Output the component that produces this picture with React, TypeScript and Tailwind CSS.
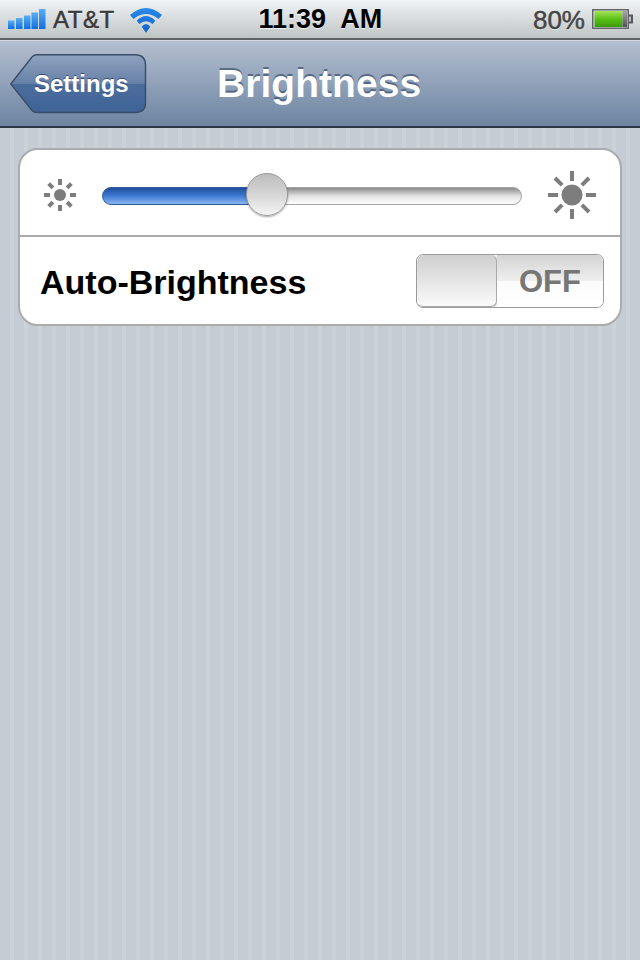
const SunIcon = ({ size, core, rayW, inner, outer }: { size: number; core: number; rayW: number; inner: number; outer: number }) => {
  const c = size / 2;
  const angles = [0, 45, 90, 135, 180, 225, 270, 315];
  return (
    <svg width={size} height={size} viewBox={`0 0 ${size} ${size}`} className="shrink-0">
      <circle cx={c} cy={c} r={core} fill="#7d7d7d" />
      {angles.map((a) => (
        <line
          key={a}
          x1={c}
          y1={c - inner}
          x2={c}
          y2={c - outer}
          stroke="#7d7d7d"
          strokeWidth={rayW}
          transform={`rotate(${a} ${c} ${c})`}
        />
      ))}
    </svg>
  );
};

const SignalBars = () => {
  const bars = [
    { x: 0, y: 11.5, h: 8.5 },
    { x: 8, y: 9, h: 11 },
    { x: 16, y: 6.5, h: 13.5 },
    { x: 23.5, y: 3.5, h: 16.5 },
    { x: 31, y: 0, h: 20 },
  ];
  return (
    <svg width="38" height="20" viewBox="0 0 38 20">
      <defs>
        <linearGradient id="sig" x1="0" y1="0" x2="0" y2="1">
          <stop offset="0" stopColor="#5aaef0" />
          <stop offset="1" stopColor="#0f6fe0" />
        </linearGradient>
      </defs>
      {bars.map((b) => (
        <rect key={b.x} x={b.x} y={b.y} width="6.5" height={b.h} fill="url(#sig)" />
      ))}
    </svg>
  );
};

const WifiIcon = () => (
  <svg width="32" height="25" viewBox="0 0 32 25">
    <defs>
      <linearGradient id="wifi" x1="0" y1="0" x2="0" y2="25" gradientUnits="userSpaceOnUse">
        <stop offset="0" stopColor="#2b8bec" />
        <stop offset="1" stopColor="#0f62c8" />
      </linearGradient>
    </defs>
    <path d="M0 7 Q16 -7 32 7 L28.5 11 Q16 1 3.5 11 Z" fill="url(#wifi)" />
    <path d="M6.7 12.7 Q16 3.5 25.3 12.7 L22.7 16 Q16 10.5 9.3 16 Z" fill="url(#wifi)" />
    <path d="M11.7 18.7 Q16 13.5 20.3 18.7 L16 24.7 Z" fill="url(#wifi)" />
  </svg>
);

const Battery = () => (
  <svg width="42" height="20" viewBox="0 0 42 20">
    <defs>
      <linearGradient id="batt" x1="0" y1="0" x2="0" y2="1">
        <stop offset="0" stopColor="#a8e45a" />
        <stop offset="0.45" stopColor="#5fc41c" />
        <stop offset="1" stopColor="#3a9a08" />
      </linearGradient>
      <linearGradient id="battEmpty" x1="0" y1="0" x2="0" y2="1">
        <stop offset="0" stopColor="#a8a8a8" />
        <stop offset="1" stopColor="#505050" />
      </linearGradient>
    </defs>
    <rect x="0.75" y="0.75" width="35.5" height="18.5" fill="#dfe2e2" stroke="#62666a" strokeWidth="1.5" />
    <rect x="2.5" y="2" width="28" height="16" fill="url(#batt)" />
    <rect x="30.5" y="2" width="4.5" height="16" fill="url(#battEmpty)" />
    <path d="M37 6.5 L40 6.5 L40 13.5 L37 13.5" fill="#b9bcbc" stroke="#555a5c" strokeWidth="2" />
  </svg>
);

const BackButton = () => (
  <div className="relative w-[137px] h-[60px] flex items-center">
    <svg width="137" height="60" viewBox="0 0 137 60" className="absolute inset-0">
      <defs>
        <linearGradient id="backBg" x1="0" y1="0" x2="0" y2="1">
          <stop offset="0" stopColor="#8fa3c0" />
          <stop offset="0.5" stopColor="#6680a6" />
          <stop offset="0.5" stopColor="#4c6d9e" />
          <stop offset="1" stopColor="#3f6396" />
        </linearGradient>
      </defs>
      <path
        d="M0.8 30 L22 3 Q24 0.8 27 0.8 L125 0.8 Q135.5 0.8 135.5 11 L135.5 49 Q135.5 58.5 125 58.5 L27 58.5 Q24 58.5 22 56.5 Z"
        fill="url(#backBg)"
        stroke="#3a4d68"
        strokeWidth="1.4"
      />
    </svg>
    <span className="relative ml-[24px] text-[24px] leading-none font-bold text-white [text-shadow:0_-1px_0_rgba(30,50,90,0.7)]">
      Settings
    </span>
  </div>
);

const BrightnessSlider = () => (
  <div className="relative flex-1 h-[18px] flex">
    <div className="w-[148px] h-full rounded-l-full border border-[#2f5a9c] bg-gradient-to-b from-[#1f4f9c] via-[#3f7ad4] to-[#8ab4ee]" />
    <div className="flex-1 h-full rounded-r-full border border-[#a3a3a3] bg-gradient-to-b from-[#8c8c8c] via-[#e2e2e2] to-[#ffffff]" />
    <div className="absolute left-[144px] top-[-14px] w-[42px] h-[43px] rounded-full border border-[#9a9a9a] bg-gradient-to-b from-[#bdbdbd] via-[#d6d6d6] to-[#f4f4f4] shadow-[0_1px_2px_rgba(0,0,0,0.35)]" />
  </div>
);

const OffSwitch = () => (
  <div className="w-[188px] h-[54px] flex rounded-[7px] border border-[#9c9c9c] overflow-hidden bg-white">
    <div className="w-[80px] h-full rounded-[6px] border-r border-b border-[#a8a8a8] bg-gradient-to-b from-[#cfcfcf] to-[#fafafa] shadow-[1px_0_2px_rgba(0,0,0,0.2)]" />
    <div className="flex-1 h-full flex items-center justify-center pt-[2px] bg-[linear-gradient(to_bottom,#d4d4d4_0%,#efefef_50%,#fbfbfb_50%,#ffffff_100%)]">
      <span className="text-[31px] leading-none font-bold text-[#767676]">OFF</span>
    </div>
  </div>
);

export default function App() {
  return (
    <div className="w-[640px] h-[960px] flex flex-col overflow-hidden font-['Liberation_Sans',Arial,sans-serif] bg-[repeating-linear-gradient(90deg,#c5ccd4_0px,#c5ccd4_10px,#cbd2d8_10px,#cbd2d8_14px)]">
      <div className="h-[40px] shrink-0 flex items-center pl-[8px] pr-[6px] border-b-2 border-[#5f6264] bg-gradient-to-b from-[#f1f4f6] to-[#bfc4c5]">
        <SignalBars />
        <span className="ml-[7px] pt-[2px] text-[24px] leading-none tracking-[0.5px] text-[#3a3a3a] [-webkit-text-stroke:0.5px_#3a3a3a] [text-shadow:0_1px_0_rgba(255,255,255,0.7)]">
          AT&amp;T
        </span>
        <div className="ml-[15px] pt-[2px]">
          <WifiIcon />
        </div>
        <span className="ml-[97px] pt-[1px] text-[27px] leading-none font-bold text-black whitespace-pre [text-shadow:0_1px_0_rgba(255,255,255,0.7)]">
          11:39  AM
        </span>
        <span className="ml-auto pt-[2px] text-[26px] leading-none text-[#454545] [-webkit-text-stroke:0.5px_#454545] [text-shadow:0_1px_0_rgba(255,255,255,0.7)]">
          80%
        </span>
        <div className="ml-[7px]">
          <Battery />
        </div>
      </div>

      <div className="relative h-[88px] shrink-0 flex items-center pl-[10px] border-t border-[#d6dbe3] border-b-2 border-b-[#2d3642] bg-gradient-to-b from-[#b4bfcf] to-[#6d84a2]">
        <BackButton />
        <span className="ml-[70px] text-[39px] leading-none font-bold text-white tracking-[0.05px] [text-shadow:0_-2px_0_rgba(50,70,100,0.65)]">
          Brightness
        </span>
      </div>

      <div className="pt-[20px] px-[18px]">
        <div className="h-[178px] rounded-[20px] border-2 border-[#a9abae] bg-white flex flex-col">
          <div className="h-[87px] flex items-center border-b-2 border-[#aaaaaa] pt-[5px] pl-[24px] pr-[24px] shrink-0">
            <SunIcon size={32} core={6} rayW={4} inner={10} outer={16} />
            <div className="flex-1 ml-[26px] mr-[26px] pt-[2px] flex items-center">
              <BrightnessSlider />
            </div>
            <SunIcon size={48} core={10.5} rayW={4} inner={14} outer={24} />
          </div>
          <div className="flex-1 flex items-center pl-[20px] pr-[16px]">
            <span className="pt-[2px] text-[34px] leading-none font-bold text-black">Auto-Brightness</span>
            <div className="ml-auto">
              <OffSwitch />
            </div>
          </div>
        </div>
      </div>
    </div>
  );
}
